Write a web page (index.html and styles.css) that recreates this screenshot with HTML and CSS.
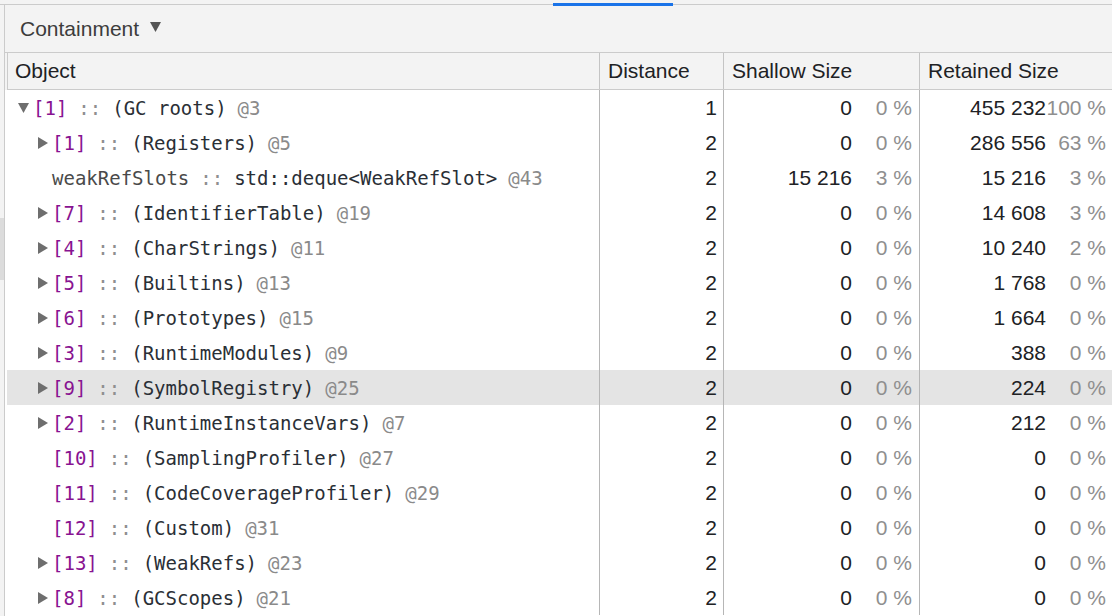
FILE: index.html
```html
<!DOCTYPE html>
<html>
<head>
<meta charset="utf-8">
<link rel="stylesheet" href="styles.css">
</head>
<body>
<div class="tabstrip"><div class="tab-underline"></div></div>
<div class="body">
  <div class="sidepane"><div class="thumb"></div></div>
  <div class="main">
    <div class="toolbar">
      <span class="view-select">Containment</span>
      <svg class="caret" width="11" height="10" viewBox="0 0 11 10"><path d="M0 0H11L5.5 10Z"/></svg>
    </div>
    <div class="head-strip">
      <div class="row head">
        <div class="c obj">Object</div>
        <div class="c col">Distance</div>
        <div class="c col">Shallow Size</div>
        <div class="c col">Retained Size</div>
      </div>
    </div>
    <div class="rows">
      <div class="row">
        <div class="c obj"><span class="tw"><svg width="11" height="10" viewBox="0 0 11 10"><path d="M0 0H11L5.5 10Z"/></svg></span><span class="id">[1]</span> <span class="sep">::</span> <span class="nm">(GC roots)</span> <span class="at">@3</span></div>
        <div class="c num">1</div>
        <div class="c size"><span class="v">0</span><span class="p">0 %</span></div>
        <div class="c size last"><span class="v">455&nbsp;232</span><span class="p">100 %</span></div>
      </div>
      <div class="row">
        <div class="c obj l1"><span class="tw"><svg width="10" height="12" viewBox="0 0 10 12"><path d="M0 0L10 6L0 12Z"/></svg></span><span class="id">[1]</span> <span class="sep">::</span> <span class="nm">(Registers)</span> <span class="at">@5</span></div>
        <div class="c num">2</div>
        <div class="c size"><span class="v">0</span><span class="p">0 %</span></div>
        <div class="c size last"><span class="v">286&nbsp;556</span><span class="p">63 %</span></div>
      </div>
      <div class="row">
        <div class="c obj l1"><span class="tw"></span><span class="prop">weakRefSlots</span> <span class="sep">::</span> <span class="nm">std::deque&lt;WeakRefSlot&gt;</span> <span class="at">@43</span></div>
        <div class="c num">2</div>
        <div class="c size"><span class="v">15&nbsp;216</span><span class="p">3 %</span></div>
        <div class="c size last"><span class="v">15&nbsp;216</span><span class="p">3 %</span></div>
      </div>
      <div class="row">
        <div class="c obj l1"><span class="tw"><svg width="10" height="12" viewBox="0 0 10 12"><path d="M0 0L10 6L0 12Z"/></svg></span><span class="id">[7]</span> <span class="sep">::</span> <span class="nm">(IdentifierTable)</span> <span class="at">@19</span></div>
        <div class="c num">2</div>
        <div class="c size"><span class="v">0</span><span class="p">0 %</span></div>
        <div class="c size last"><span class="v">14&nbsp;608</span><span class="p">3 %</span></div>
      </div>
      <div class="row">
        <div class="c obj l1"><span class="tw"><svg width="10" height="12" viewBox="0 0 10 12"><path d="M0 0L10 6L0 12Z"/></svg></span><span class="id">[4]</span> <span class="sep">::</span> <span class="nm">(CharStrings)</span> <span class="at">@11</span></div>
        <div class="c num">2</div>
        <div class="c size"><span class="v">0</span><span class="p">0 %</span></div>
        <div class="c size last"><span class="v">10&nbsp;240</span><span class="p">2 %</span></div>
      </div>
      <div class="row">
        <div class="c obj l1"><span class="tw"><svg width="10" height="12" viewBox="0 0 10 12"><path d="M0 0L10 6L0 12Z"/></svg></span><span class="id">[5]</span> <span class="sep">::</span> <span class="nm">(Builtins)</span> <span class="at">@13</span></div>
        <div class="c num">2</div>
        <div class="c size"><span class="v">0</span><span class="p">0 %</span></div>
        <div class="c size last"><span class="v">1&nbsp;768</span><span class="p">0 %</span></div>
      </div>
      <div class="row">
        <div class="c obj l1"><span class="tw"><svg width="10" height="12" viewBox="0 0 10 12"><path d="M0 0L10 6L0 12Z"/></svg></span><span class="id">[6]</span> <span class="sep">::</span> <span class="nm">(Prototypes)</span> <span class="at">@15</span></div>
        <div class="c num">2</div>
        <div class="c size"><span class="v">0</span><span class="p">0 %</span></div>
        <div class="c size last"><span class="v">1&nbsp;664</span><span class="p">0 %</span></div>
      </div>
      <div class="row">
        <div class="c obj l1"><span class="tw"><svg width="10" height="12" viewBox="0 0 10 12"><path d="M0 0L10 6L0 12Z"/></svg></span><span class="id">[3]</span> <span class="sep">::</span> <span class="nm">(RuntimeModules)</span> <span class="at">@9</span></div>
        <div class="c num">2</div>
        <div class="c size"><span class="v">0</span><span class="p">0 %</span></div>
        <div class="c size last"><span class="v">388</span><span class="p">0 %</span></div>
      </div>
      <div class="row selected">
        <div class="c obj l1"><span class="tw"><svg width="10" height="12" viewBox="0 0 10 12"><path d="M0 0L10 6L0 12Z"/></svg></span><span class="id">[9]</span> <span class="sep">::</span> <span class="nm">(SymbolRegistry)</span> <span class="at">@25</span></div>
        <div class="c num">2</div>
        <div class="c size"><span class="v">0</span><span class="p">0 %</span></div>
        <div class="c size last"><span class="v">224</span><span class="p">0 %</span></div>
      </div>
      <div class="row">
        <div class="c obj l1"><span class="tw"><svg width="10" height="12" viewBox="0 0 10 12"><path d="M0 0L10 6L0 12Z"/></svg></span><span class="id">[2]</span> <span class="sep">::</span> <span class="nm">(RuntimeInstanceVars)</span> <span class="at">@7</span></div>
        <div class="c num">2</div>
        <div class="c size"><span class="v">0</span><span class="p">0 %</span></div>
        <div class="c size last"><span class="v">212</span><span class="p">0 %</span></div>
      </div>
      <div class="row">
        <div class="c obj l1"><span class="tw"></span><span class="id">[10]</span> <span class="sep">::</span> <span class="nm">(SamplingProfiler)</span> <span class="at">@27</span></div>
        <div class="c num">2</div>
        <div class="c size"><span class="v">0</span><span class="p">0 %</span></div>
        <div class="c size last"><span class="v">0</span><span class="p">0 %</span></div>
      </div>
      <div class="row">
        <div class="c obj l1"><span class="tw"></span><span class="id">[11]</span> <span class="sep">::</span> <span class="nm">(CodeCoverageProfiler)</span> <span class="at">@29</span></div>
        <div class="c num">2</div>
        <div class="c size"><span class="v">0</span><span class="p">0 %</span></div>
        <div class="c size last"><span class="v">0</span><span class="p">0 %</span></div>
      </div>
      <div class="row">
        <div class="c obj l1"><span class="tw"></span><span class="id">[12]</span> <span class="sep">::</span> <span class="nm">(Custom)</span> <span class="at">@31</span></div>
        <div class="c num">2</div>
        <div class="c size"><span class="v">0</span><span class="p">0 %</span></div>
        <div class="c size last"><span class="v">0</span><span class="p">0 %</span></div>
      </div>
      <div class="row">
        <div class="c obj l1"><span class="tw"><svg width="10" height="12" viewBox="0 0 10 12"><path d="M0 0L10 6L0 12Z"/></svg></span><span class="id">[13]</span> <span class="sep">::</span> <span class="nm">(WeakRefs)</span> <span class="at">@23</span></div>
        <div class="c num">2</div>
        <div class="c size"><span class="v">0</span><span class="p">0 %</span></div>
        <div class="c size last"><span class="v">0</span><span class="p">0 %</span></div>
      </div>
      <div class="row">
        <div class="c obj l1"><span class="tw"><svg width="10" height="12" viewBox="0 0 10 12"><path d="M0 0L10 6L0 12Z"/></svg></span><span class="id">[8]</span> <span class="sep">::</span> <span class="nm">(GCScopes)</span> <span class="at">@21</span></div>
        <div class="c num">2</div>
        <div class="c size"><span class="v">0</span><span class="p">0 %</span></div>
        <div class="c size last"><span class="v">0</span><span class="p">0 %</span></div>
      </div>
    </div>
  </div>
</div>
</body>
</html>
```
FILE: styles.css
```css
html, body {
  margin: 0;
  padding: 0;
  width: 1112px;
  height: 616px;
  overflow: hidden;
  background: #ffffff;
  font-family: "Liberation Sans", Arial, sans-serif;
  font-size: 21px;
  color: #202124;
}

.tabstrip {
  height: 4px;
  background: #f3f3f3;
  border-bottom: 1px solid #cbcbcb;
  display: flex;
  padding-left: 553px;
}

.tab-underline {
  width: 120px;
  height: 3px;
  margin-top: 3px;
  background: #1a73e8;
  position: relative;
  z-index: 1;
}

.body {
  display: flex;
  height: 611px;
}

.sidepane {
  width: 4px;
  flex: none;
  background: #f3f3f3;
  border-right: 1px solid #cbcbcb;
}

.thumb {
  margin-top: 213px;
  height: 62px;
  background: #dcdcdc;
}

.main {
  flex: 1;
  display: flex;
  flex-direction: column;
  min-width: 0;
}

.toolbar {
  height: 47px;
  flex: none;
  background: #f3f3f3;
  border-bottom: 1px solid #cbcbcb;
  display: flex;
  align-items: center;
  padding-left: 15px;
  color: #3c3c3c;
}

.caret {
  margin-left: 11px;
  margin-top: -3px;
  fill: #555555;
}

.head-strip {
  background: #f3f3f3;
  padding-left: 2px;
  flex: none;
}

.rows {
  padding-left: 2px;
}

.row {
  display: grid;
  grid-template-columns: 591px 124px 196px 1fr;
  height: 35px;
  border-left: 1px solid #ffffff;
}

.row.head {
  height: 36px;
  border-left: 1px solid #cbcbcb;
  border-bottom: 1px solid #cbcbcb;
  color: #202124;
}

.row.selected {
  background: #e4e4e4;
  border-left-color: #e4e4e4;
}

.c {
  display: flex;
  align-items: center;
  white-space: nowrap;
  overflow: hidden;
}

.c + .c {
  border-left: 1px solid #b6b6b6;
}

.head .c + .c {
  border-left-color: #c4c4c4;
}

.head .obj {
  padding-left: 7px;
}

.head .col {
  padding-left: 8px;
}

.rows .obj {
  padding-left: 7px;
  font-family: "DejaVu Sans Mono", "Liberation Mono", monospace;
  font-size: 19px;
  color: #2a2f36;
}

.rows .obj.l1 {
  padding-left: 26px;
}

.tw {
  width: 18px;
  flex: none;
  display: flex;
  align-items: center;
  justify-content: center;
  fill: #6e6e6e;
}

.tw svg {
  margin-left: -1px;
}

.obj .id {
  color: #881391;
  white-space: pre;
}

.obj .sep {
  color: #8f8f8f;
  margin: 0 11px;
}

.obj .at {
  color: #8a8a8a;
  margin-left: 11px;
}

.obj .prop {
  color: #4a4a4a;
}

.num {
  justify-content: flex-end;
  padding-right: 6px;
}

.size {
  justify-content: flex-end;
  padding-right: 7px;
}

.size.last {
  padding-right: 6px;
}

.size .p {
  width: 60px;
  text-align: right;
  color: #8f8f8f;
}
```
